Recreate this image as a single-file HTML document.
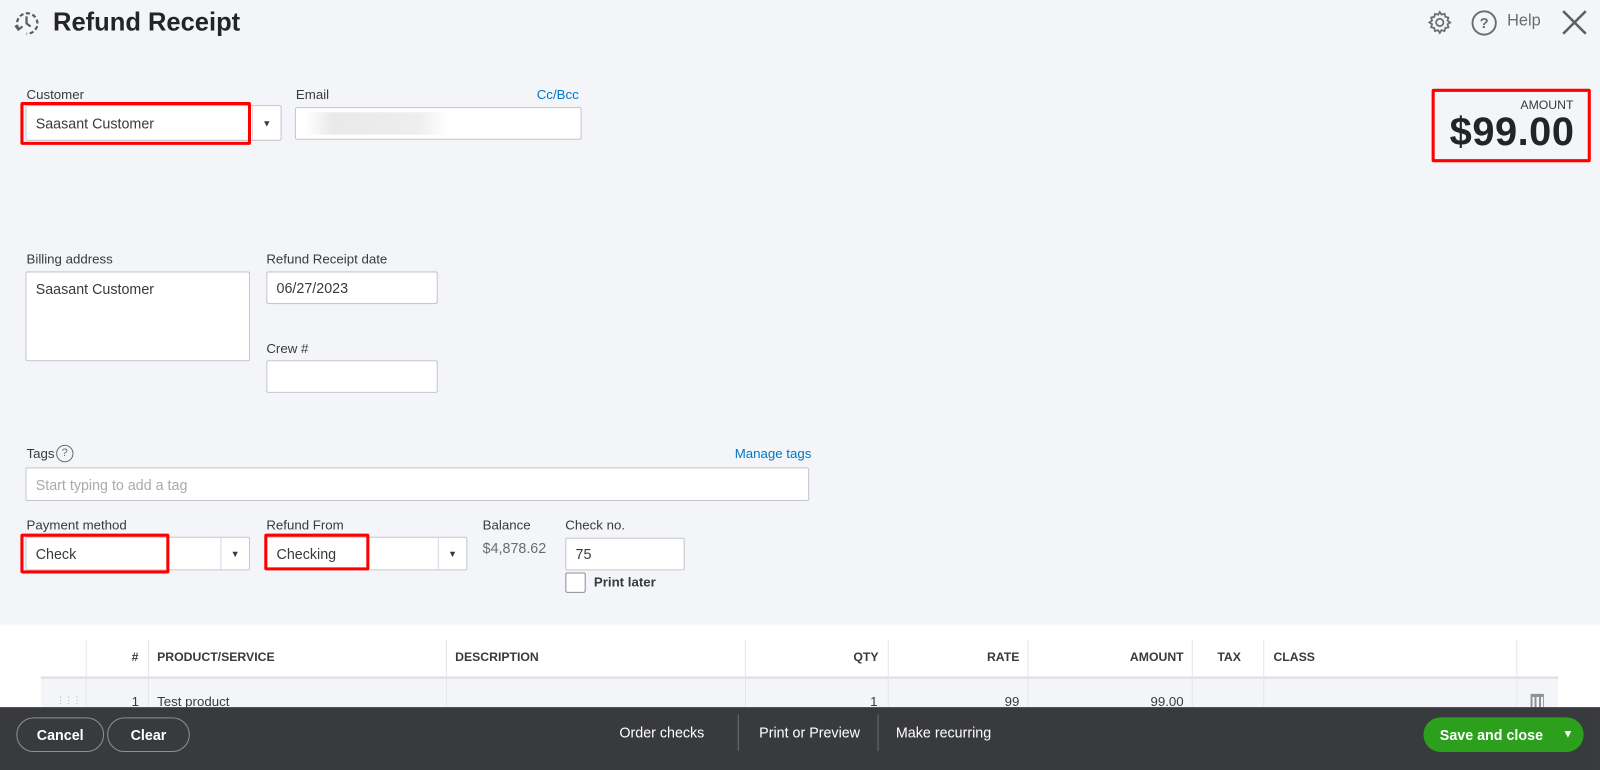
<!DOCTYPE html>
<html><head><meta charset="utf-8"><style>
*{box-sizing:border-box;margin:0;padding:0}
body{width:1600px;height:755px;overflow:hidden;background:#f4f5f8;font-family:"Liberation Sans",sans-serif;color:#393a3d;position:relative}
#w{position:absolute;left:0;top:0;width:1568px;height:740px;transform:scale(1.0204);transform-origin:0 0}
.a{position:absolute}
.lbl{position:absolute;font-size:13px;color:#393a3d}
.inp{position:absolute;background:#fff;border:1px solid #c4c6cc;border-radius:2px;font-size:14px;padding:0 9px;display:flex;align-items:center;color:#393a3d}
.red{position:absolute;border:3px solid #f00;border-radius:2px}
.dd{position:absolute;top:0;bottom:0;border-left:1px solid #d4d7dc;width:28px;display:flex;align-items:center;justify-content:center;font-size:9px}
.th{position:absolute;top:637px;font-size:12px;font-weight:bold;color:#393a3d}
.vl{position:absolute;top:627px;height:66px;border-left:1px solid #e3e5e8}
.ft{position:absolute;color:#fff;font-size:14px}
</style></head><body><div id="w">
<svg class="a" style="left:12px;top:8px" width="30" height="30" viewBox="0 0 30 30" fill="none" stroke="#5c5e62" stroke-width="2.2"><path d="M6 20 A10 10 0 1 1 14 25" stroke-dasharray="4 2.5"/><path d="M14 8v7l4 3"/><path d="M3 17l3 4 4-3"/></svg>
<div class="a" style="left:52px;top:8px;font-size:25px;font-weight:bold;color:#232427">Refund Receipt</div>
<svg class="a" style="left:1398px;top:9px" width="26" height="26" viewBox="0 0 24 24" fill="none" stroke="#6b6c72" stroke-width="1.6"><circle cx="12" cy="12" r="3.3"/><path d="M12 2.5l1.6 2.4 2.8-.8.6 2.8 2.8.7-.8 2.8L21.4 12l-2.4 1.6.8 2.8-2.8.6-.7 2.8-2.8-.8L12 21.5l-1.6-2.5-2.8.8-.6-2.8-2.8-.7.8-2.8L2.6 12l2.4-1.6-.8-2.8 2.8-.6.7-2.8 2.8.8z"/></svg>
<svg class="a" style="left:1441px;top:9px" width="27" height="27" viewBox="0 0 26 26" fill="none" stroke="#6b6c72" stroke-width="1.8"><circle cx="13" cy="13" r="11"/><text x="13" y="18" font-size="14" text-anchor="middle" fill="#6b6c72" stroke="none" font-family="Liberation Sans" font-weight="bold">?</text></svg>
<div class="a" style="left:1477px;top:12px;font-size:16px;color:#6b6c72">Help</div>
<svg class="a" style="left:1530px;top:9px" width="26" height="26" viewBox="0 0 27 27" stroke="#5c5e62" stroke-width="2.6"><path d="M2 2L25 25M25 2L2 25"/></svg>

<div class="lbl" style="left:26px;top:85px">Customer</div>
<div class="inp" style="left:25px;top:103px;width:251px;height:35px">Saasant Customer<div class="dd" style="right:0">▼</div></div>
<div class="red" style="left:20px;top:100px;width:226px;height:42px"></div>
<div class="lbl" style="left:290px;top:85px">Email</div>
<div class="lbl" style="left:526px;top:85px;color:#0077c5">Cc/Bcc</div>
<div class="inp" style="left:289px;top:105px;width:281px;height:32px"><div style="width:140px;height:22px;background:linear-gradient(90deg,#fff,#e9e9ea 20%,#eee 80%,#fff)"></div></div>

<div class="red" style="left:1403px;top:87px;width:156px;height:72px"></div>
<div class="a" style="left:1480px;top:96px;width:62px;text-align:right;font-size:12px;color:#393a3d">AMOUNT</div>
<div class="a" style="left:1405px;top:108px;width:138px;text-align:right;font-size:39px;font-weight:bold;color:#232427;letter-spacing:0.5px">$99.00</div>

<div class="lbl" style="left:26px;top:246px">Billing address</div>
<div class="inp" style="left:25px;top:266px;width:220px;height:88px;align-items:flex-start;padding-top:8px">Saasant Customer</div>
<div class="lbl" style="left:261px;top:246px">Refund Receipt date</div>
<div class="inp" style="left:261px;top:266px;width:168px;height:32px">06/27/2023</div>
<div class="lbl" style="left:261px;top:334px">Crew #</div>
<div class="inp" style="left:261px;top:353px;width:168px;height:32px"></div>

<div class="lbl" style="left:26px;top:437px">Tags</div>
<div class="a" style="left:55px;top:436px;width:17px;height:17px;border:1px solid #6b6c72;border-radius:50%;font-size:11px;text-align:center;line-height:15px;color:#6b6c72">?</div>
<div class="lbl" style="left:720px;top:437px;color:#0077c5">Manage tags</div>
<div class="inp" style="left:25px;top:458px;width:768px;height:33px;color:#a8aaaf">Start typing to add a tag</div>

<div class="lbl" style="left:26px;top:507px">Payment method</div>
<div class="inp" style="left:25px;top:526px;width:220px;height:33px">Check<div class="dd" style="right:0">▼</div></div>
<div class="red" style="left:20px;top:523px;width:146px;height:39px"></div>
<div class="lbl" style="left:261px;top:507px">Refund From</div>
<div class="inp" style="left:261px;top:526px;width:197px;height:33px">Checking<div class="dd" style="right:0">▼</div></div>
<div class="red" style="left:259px;top:523px;width:103px;height:36px"></div>
<div class="lbl" style="left:473px;top:507px">Balance</div>
<div class="lbl" style="left:473px;top:529px;color:#6b6c72;font-size:14px">$4,878.62</div>
<div class="lbl" style="left:554px;top:507px">Check no.</div>
<div class="inp" style="left:554px;top:527px;width:117px;height:32px">75</div>
<div class="a" style="left:554px;top:561px;width:20px;height:20px;background:#fff;border:1px solid #8d9096;border-radius:2px"></div>
<div class="lbl" style="left:582px;top:563px;font-weight:bold;font-size:13px">Print later</div>

<div class="a" style="left:0;top:612px;width:1568px;height:82px;background:#fff"></div>
<div class="a" style="left:40px;top:663px;width:1487px;height:31px;background:#f4f5f8;border-top:2px solid #dcdee2"></div>
<div class="vl" style="left:84px"></div><div class="vl" style="left:145px"></div><div class="vl" style="left:437px"></div><div class="vl" style="left:730px"></div><div class="vl" style="left:870px"></div><div class="vl" style="left:1007px"></div><div class="vl" style="left:1168px"></div><div class="vl" style="left:1238px"></div><div class="vl" style="left:1486px"></div>
<div class="th" style="left:129px">#</div>
<div class="th" style="left:154px">PRODUCT/SERVICE</div>
<div class="th" style="left:446px">DESCRIPTION</div>
<div class="th" style="left:800px;width:61px;text-align:right">QTY</div>
<div class="th" style="left:900px;width:99px;text-align:right">RATE</div>
<div class="th" style="left:1060px;width:100px;text-align:right">AMOUNT</div>
<div class="th" style="left:1193px">TAX</div>
<div class="th" style="left:1248px">CLASS</div>
<div class="a" style="left:55px;top:681px;font-size:9px;color:#aaa;letter-spacing:-1px">⋮⋮⋮</div>
<div class="lbl" style="left:129px;top:680px;font-size:13px">1</div>
<div class="lbl" style="left:154px;top:680px;font-size:13px">Test product</div>
<div class="lbl" style="left:820px;top:680px;width:40px;text-align:right">1</div>
<div class="lbl" style="left:950px;top:680px;width:49px;text-align:right">99</div>
<div class="lbl" style="left:1090px;top:680px;width:70px;text-align:right">99.00</div>
<div class="a" style="left:1500px;top:680px;width:13px;height:14px;border-top:3px solid #8d9096;background:repeating-linear-gradient(90deg,#8d9096 0 2px,transparent 2px 4px)"></div>

<div class="a" style="left:0;top:693px;width:1568px;height:62px;background:#393a3d"></div>
<div class="a" style="left:16px;top:703px;width:86px;height:34px;border:1px solid #8d9096;border-radius:18px;color:#fff;font-weight:bold;font-size:14px;text-align:center;line-height:32px">Cancel</div>
<div class="a" style="left:105px;top:703px;width:81px;height:34px;border:1px solid #8d9096;border-radius:18px;color:#fff;font-weight:bold;font-size:14px;text-align:center;line-height:32px">Clear</div>
<div class="ft" style="left:607px;top:710px">Order checks</div>
<div class="a" style="left:723px;top:700px;height:36px;border-left:1px solid #6b6c72"></div>
<div class="ft" style="left:744px;top:710px">Print or Preview</div>
<div class="a" style="left:860px;top:700px;height:36px;border-left:1px solid #6b6c72"></div>
<div class="ft" style="left:878px;top:710px">Make recurring</div>
<div class="a" style="left:1395px;top:703px;width:157px;height:34px;background:#2ca01c;border-radius:18px;color:#fff;font-weight:bold;font-size:14px;line-height:34px;padding-left:16px">Save and close<span style="position:absolute;right:10px;font-size:11px">▼</span></div>
</div></body></html>
